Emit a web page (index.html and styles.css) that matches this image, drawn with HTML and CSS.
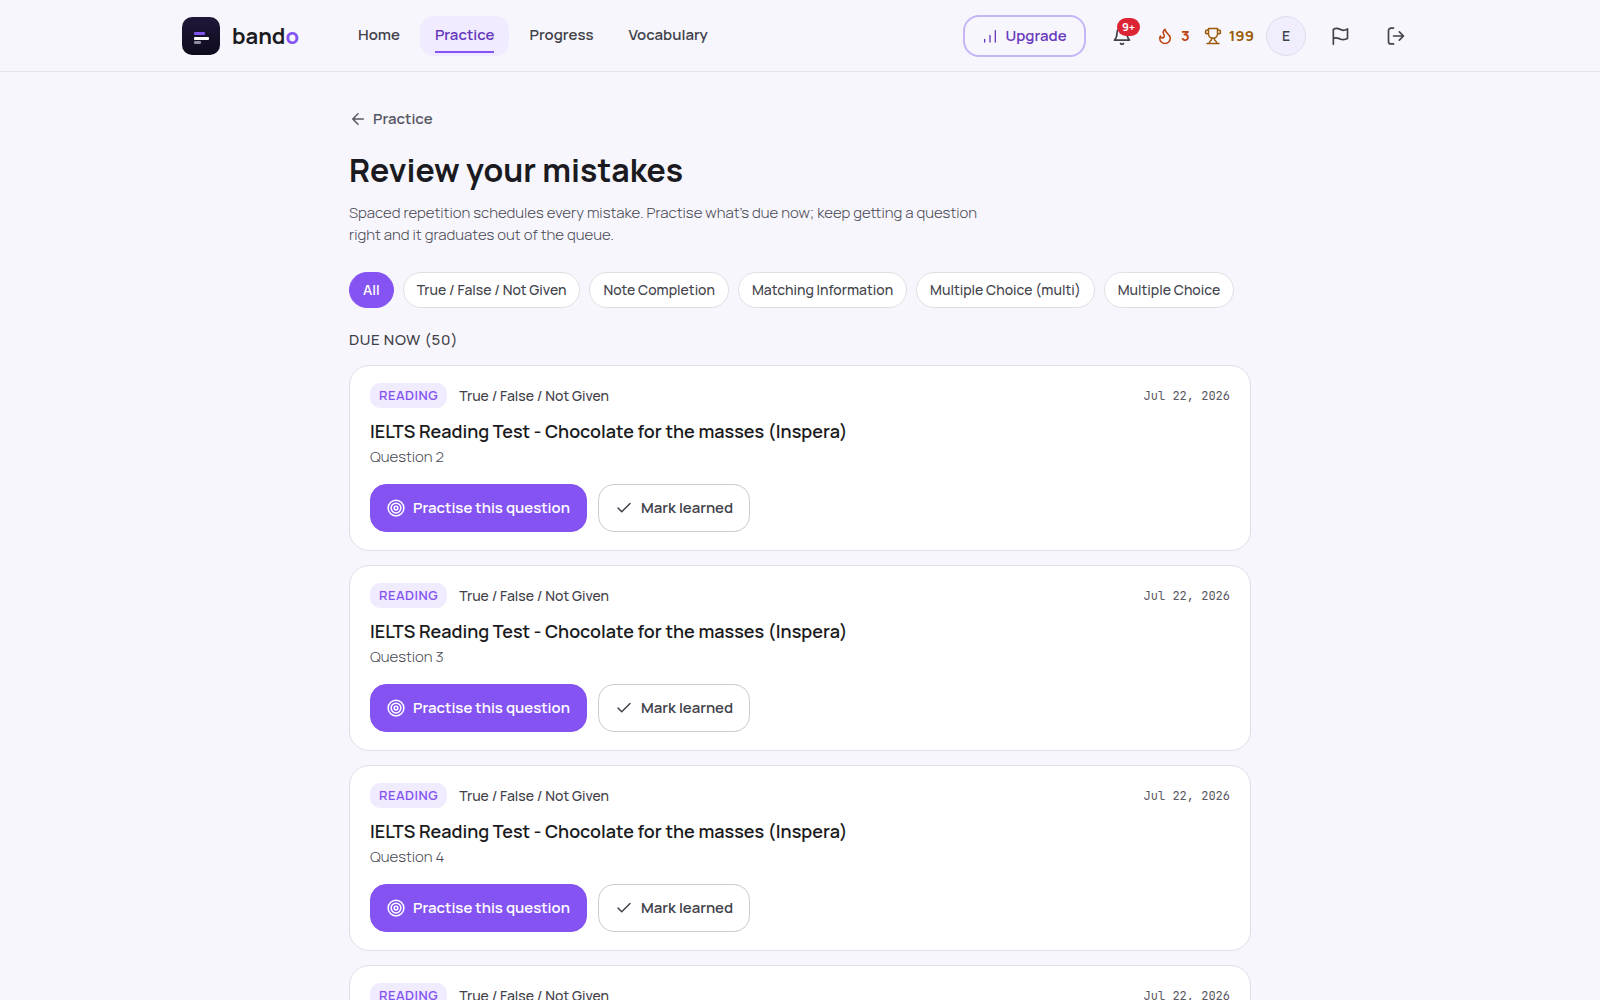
FILE: index.html
```html
<!DOCTYPE html>
<html lang="en">
<head>
<meta charset="utf-8">
<meta name="viewport" content="width=device-width, initial-scale=1">
<title>Review your mistakes – bando</title>
<link rel="stylesheet" href="styles.css">
</head>
<body>
<svg class="sprite" aria-hidden="true">
  <symbol id="target" viewBox="0 0 24 24"><circle cx="12" cy="12" r="10.500"/><circle cx="12" cy="12" r="6.500"/><circle cx="12" cy="12" r="2.500"/></symbol>
  <symbol id="check" viewBox="0 0 24 24"><path d="M20 6 9 17l-5-5"/></symbol>
</svg>
<header class="topbar">
  <div class="topbar-inner">
    <a class="brand" href="#">
      <svg class="logo" viewBox="0 0 38 38" aria-hidden="true">
        <defs><linearGradient id="tile" x1="0" y1="0" x2="0" y2="1"><stop offset="0" stop-color="#20183a"/><stop offset="1" stop-color="#0e0a1c"/></linearGradient></defs>
        <rect width="38" height="38" rx="10" fill="url(#tile)"/>
        <rect x="12" y="15" width="11" height="3" rx="1" fill="#8255ef"/>
        <rect x="12" y="20" width="15" height="3" rx="1" fill="#fff"/>
        <rect x="12" y="24" width="7" height="3" rx="1" fill="#8e8b99"/>
      </svg>
      <span class="wordmark">band<span class="accent">o</span></span>
    </a>
    <nav class="nav" aria-label="Main">
      <a href="#">Home</a>
      <a href="#" class="active" aria-current="page">Practice</a>
      <a href="#">Progress</a>
      <a href="#">Vocabulary</a>
    </nav>
    <div class="tools">
      <button class="upgrade" type="button">
        <svg class="icon icon-sm" viewBox="0 0 24 24" aria-hidden="true"><path d="M4 21v-4M12 21V11M20 21V4"/></svg>
        Upgrade
      </button>
      <button class="icon-btn" type="button" aria-label="Notifications">
        <svg class="icon icon-lg" viewBox="0 0 24 24" aria-hidden="true"><path d="M6 8a6 6 0 0 1 12 0c0 5 1 7 3 9H3c2-2 3-4 3-9M10.300 21a2 2 0 0 0 3.400 0"/></svg>
        <span class="count">9+</span>
      </button>
      <div class="stats">
        <span class="stat streak">
          <svg class="icon" viewBox="0 0 24 24" aria-hidden="true"><path d="M8.500 14.500A2.500 2.500 0 0 0 11 12c0-1.400-.5-2-1-3-1.100-2.100-.2-4.100 2-6 .5 2.500 2 4.900 4 6.500 2 1.600 3 3.500 3 5.500a7 7 0 1 1-14 0c0-1.200.4-2.300 1-3a2.500 2.500 0 0 0 2.500 2.500z"/></svg>
          3
        </span>
        <span class="stat points">
          <svg class="icon" viewBox="0 0 24 24" aria-hidden="true"><path d="M6 9H4.500a2.500 2.500 0 0 1 0-5H6M18 9h1.500a2.500 2.500 0 0 0 0-5H18M4 22h16M10 14.700V17c0 .6-.5 1-1 1.200C7.900 18.800 7 20.200 7 22M14 14.700V17c0 .6.500 1 1 1.200 1.100.6 2 2 2 3.800M18 2H6v7a6 6 0 0 0 12 0z"/></svg>
          199
        </span>
      </div>
      <button class="avatar" type="button" aria-label="Account">E</button>
      <button class="icon-btn" type="button" aria-label="Report a problem">
        <svg class="icon icon-lg" viewBox="0 0 24 24" aria-hidden="true"><path d="M4 22V4c3-2 5.500-1.500 8 0s5 2 9-.5V15c-4 2-6.500 1.500-9 .5S7 13 4 15"/></svg>
      </button>
      <button class="icon-btn" type="button" aria-label="Log out">
        <svg class="icon icon-lg" viewBox="0 0 24 24" aria-hidden="true"><path d="M9 2.500H6a3 3 0 0 0-3 3v13a3 3 0 0 0 3 3h3M9 12h12M16 7l5 5-5 5"/></svg>
      </button>
    </div>
  </div>
</header>
<main class="page">
  <a class="back" href="#">
    <svg class="icon" viewBox="0 0 24 24" aria-hidden="true"><path d="M19 12H5M12 5l-7 7 7 7"/></svg>
    Practice
  </a>
  <h1>Review your mistakes</h1>
  <p class="lead">Spaced repetition schedules every mistake. Practise what’s due now; keep getting a question right and it graduates out of the queue.</p>
  <div class="filters" role="group" aria-label="Question type">
    <button type="button" class="chip selected" aria-pressed="true">All</button>
    <button type="button" class="chip">True / False / Not Given</button>
    <button type="button" class="chip">Note Completion</button>
    <button type="button" class="chip">Matching Information</button>
    <button type="button" class="chip">Multiple Choice (multi)</button>
    <button type="button" class="chip">Multiple Choice</button>
  </div>
  <h2>DUE NOW (50)</h2>
  <div class="cards">
    <article class="card">
      <div class="meta"><span class="tag">READING</span><span class="kind">True / False / Not Given</span><time datetime="2026-07-22">Jul 22, 2026</time></div>
      <h3>IELTS Reading Test - Chocolate for the masses (Inspera)</h3>
      <p>Question 2</p>
      <div class="actions">
        <button class="btn primary" type="button"><svg class="icon" aria-hidden="true"><use href="#target"/></svg>Practise this question</button>
        <button class="btn" type="button"><svg class="icon" aria-hidden="true"><use href="#check"/></svg>Mark learned</button>
      </div>
    </article>
    <article class="card">
      <div class="meta"><span class="tag">READING</span><span class="kind">True / False / Not Given</span><time datetime="2026-07-22">Jul 22, 2026</time></div>
      <h3>IELTS Reading Test - Chocolate for the masses (Inspera)</h3>
      <p>Question 3</p>
      <div class="actions">
        <button class="btn primary" type="button"><svg class="icon" aria-hidden="true"><use href="#target"/></svg>Practise this question</button>
        <button class="btn" type="button"><svg class="icon" aria-hidden="true"><use href="#check"/></svg>Mark learned</button>
      </div>
    </article>
    <article class="card">
      <div class="meta"><span class="tag">READING</span><span class="kind">True / False / Not Given</span><time datetime="2026-07-22">Jul 22, 2026</time></div>
      <h3>IELTS Reading Test - Chocolate for the masses (Inspera)</h3>
      <p>Question 4</p>
      <div class="actions">
        <button class="btn primary" type="button"><svg class="icon" aria-hidden="true"><use href="#target"/></svg>Practise this question</button>
        <button class="btn" type="button"><svg class="icon" aria-hidden="true"><use href="#check"/></svg>Mark learned</button>
      </div>
    </article>
    <article class="card">
      <div class="meta"><span class="tag">READING</span><span class="kind">True / False / Not Given</span><time datetime="2026-07-22">Jul 22, 2026</time></div>
      <h3>IELTS Reading Test - Chocolate for the masses (Inspera)</h3>
      <p>Question 5</p>
      <div class="actions">
        <button class="btn primary" type="button"><svg class="icon" aria-hidden="true"><use href="#target"/></svg>Practise this question</button>
        <button class="btn" type="button"><svg class="icon" aria-hidden="true"><use href="#check"/></svg>Mark learned</button>
      </div>
    </article>
  </div>
</main>
</body>
</html>
```
FILE: styles.css
```css
:root {
  --bg: #f7f6fc;
  --ink: #1a1a20;
  --text: #42424b;
  --muted: #575763;
  --soft: #484853;
  --line: #dfdfe5;
  --violet: #8453f2;
  --violet-dark: #6739bd;
  --tint: #f0ebff;
}
* { box-sizing: border-box; }
body {
  margin: 0;
  background: var(--bg);
  color: var(--text);
  font: 600 15px/22px Manrope, Inter, sans-serif;
}
a { color: inherit; text-decoration: none; }
button { font: inherit; color: inherit; cursor: pointer; padding: 0; }
h1, h2, h3, p { margin: 0; }
.sprite { display: none; }
.icon {
  width: 18px;
  height: 18px;
  flex: none;
  fill: none;
  stroke: currentColor;
  stroke-width: 2;
  stroke-linecap: round;
  stroke-linejoin: round;
}
.icon-sm { width: 16px; height: 16px; }
.icon-lg { width: 20px; height: 20px; }

.topbar { border-bottom: 1px solid #e5e4eb; }
.topbar-inner {
  max-width: 1236px;
  height: 71px;
  margin: 0 auto;
  display: flex;
  align-items: center;
}
.brand { display: flex; align-items: center; gap: 12px; width: 161px; }
.logo { width: 38px; height: 38px; }
.wordmark { font-size: 22px; font-weight: 700; color: var(--ink); }
.accent { color: var(--violet); }
.nav { display: flex; gap: 5px; }
.nav a { padding: 8px 15px 10px; border-radius: 14px; }
.nav .active {
  background: linear-gradient(var(--violet), var(--violet)) center bottom 3px / calc(100% - 30px) 2px no-repeat var(--tint);
  color: var(--violet-dark);
}
.tools { display: flex; align-items: center; gap: 12px; margin-left: auto; }
.upgrade {
  display: flex;
  align-items: center;
  justify-content: center;
  gap: 7px;
  height: 42px;
  min-width: 123px;
  margin-right: 2px;
  border: 2px solid #c6b5f8;
  border-radius: 16px;
  background: none;
  color: var(--violet-dark);
}
.icon-btn {
  position: relative;
  display: grid;
  place-items: center;
  width: 44px;
  height: 44px;
  border: 0;
  background: none;
}
.count {
  position: absolute;
  top: 4px;
  right: 4px;
  min-width: 22px;
  padding: 0 5px;
  border-radius: 9px;
  background: #dc2434;
  color: #fff;
  font-size: 11px;
  font-weight: 700;
  line-height: 18px;
}
.stats { display: flex; gap: 14px; }
.stat { display: flex; align-items: center; gap: 7px; font-weight: 700; }
.streak { color: #bd4310; }
.points { color: #9a5a06; }
.avatar {
  width: 40px;
  height: 40px;
  border: 1px solid #e0dcec;
  border-radius: 50%;
  background: #f0edfd;
  font-size: 14px;
}

.page { max-width: 902px; margin: 0 auto; padding: 36px 0 48px; }
.back { display: inline-flex; align-items: center; gap: 6px; color: var(--muted); vertical-align: top; }
h1 { margin-top: 19px; color: var(--ink); font-size: 32px; font-weight: 700; line-height: 42px; }
.lead { max-width: 640px; margin-top: 11px; color: var(--soft); font-weight: 300; }
.filters { display: flex; flex-wrap: wrap; gap: 9px; margin-top: 26px; }
.chip {
  height: 36px;
  padding: 0 13px;
  border: 1px solid var(--line);
  border-radius: 18px;
  background: #fff;
  font-size: 14px;
  font-weight: 500;
}
.chip.selected { border-color: var(--violet); background: var(--violet); color: #fff; font-weight: 600; }
h2 { margin: 21px 0 14px; font-size: 15px; font-weight: 500; letter-spacing: 0.04em; }
.cards { display: grid; gap: 14px; }
.card { padding: 17px 20px 18px; border: 1px solid var(--line); border-radius: 20px; background: #fff; }
.meta { display: flex; align-items: center; gap: 12px; line-height: 21px; }
.tag {
  padding: 2px 9px;
  border-radius: 10px;
  background: var(--tint);
  color: var(--violet);
  font-size: 13px;
  letter-spacing: 0.04em;
}
.kind { font-size: 14px; font-weight: 500; }
time { margin-left: auto; color: var(--muted); font: 12px/18px "JetBrains Mono", "Liberation Mono", monospace; }
h3 { margin-top: 9px; color: var(--ink); font-size: 18px; font-weight: 600; line-height: 28px; }
.card p { margin-top: 1px; color: var(--soft); font-weight: 300; }
.actions { display: flex; gap: 11px; margin-top: 16px; }
.btn {
  display: flex;
  align-items: center;
  justify-content: center;
  gap: 8px;
  height: 48px;
  padding: 0 16px;
  border: 1px solid #cbcbd1;
  border-radius: 16px;
  background: #fff;
}
.btn.primary { border-color: var(--violet); background: var(--violet); color: #fff; }
```
